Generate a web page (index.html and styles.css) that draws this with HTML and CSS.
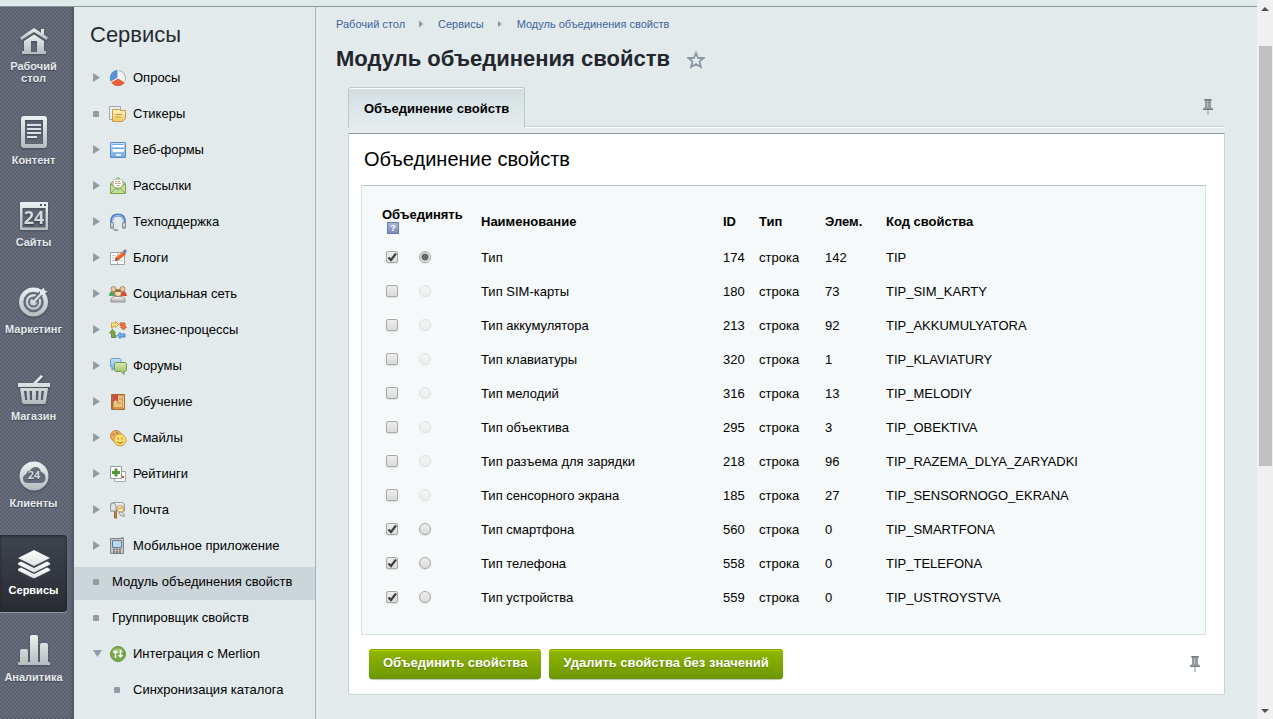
FILE: index.html
```html
<!DOCTYPE html>
<html lang="ru">
<head>
<meta charset="utf-8">
<meta name="viewport" content="width=device-width, initial-scale=1">
<title>Модуль объединения свойств</title>
<link rel="stylesheet" href="styles.css">
</head>
<body>
<svg class="defs" width="0" height="0" aria-hidden="true">
  <defs>
    <linearGradient id="metal" x1="0" y1="0" x2="0" y2="1"><stop offset="0" stop-color="#edf1f1"/><stop offset="1" stop-color="#b4bcbf"/></linearGradient>
    <linearGradient id="bright" x1="0" y1="0" x2="0" y2="1"><stop offset="0" stop-color="#ffffff"/><stop offset="1" stop-color="#dde1e2"/></linearGradient>
    <linearGradient id="blue" x1="0" y1="0" x2="0" y2="1"><stop offset="0" stop-color="#c6e4fa"/><stop offset="1" stop-color="#6ea6e0"/></linearGradient>
    <linearGradient id="green" x1="0" y1="0" x2="0" y2="1"><stop offset="0" stop-color="#d9eab4"/><stop offset="1" stop-color="#8fba5a"/></linearGradient>
    <linearGradient id="gold" x1="0" y1="0" x2="0" y2="1"><stop offset="0" stop-color="#fff6c4"/><stop offset="1" stop-color="#f2c65a"/></linearGradient>
    <linearGradient id="gray" x1="0" y1="0" x2="0" y2="1"><stop offset="0" stop-color="#fafafa"/><stop offset="1" stop-color="#a5a5a5"/></linearGradient>
    <symbol id="pin" viewBox="0 0 10 16"><path d="M1.500 0h7v2H8v6l2 1.500V11H0V9.500L2 8V2h-.5z" fill="#929ca0"/><path d="M1.500 0h7v1.500h-7zM0 10h10v1H0z" fill="#717b80"/><path d="M4 2h1v6H4z" fill="#b5bdc0"/><path d="M4.500 11h1v5h-1z" fill="#858f93"/></symbol>
  </defs>
</svg>
<div class="window">
  <div class="app">
    <div class="topbar"></div>
    <div class="columns">
      <nav class="rail" aria-label="Разделы">
        <a class="rail-item" href="#"><svg width="28" height="26" viewBox="0 0 28 26" fill="url(#metal)"><path d="M14 0L0 9.500l1.500 2.500L14 4l12.500 8L28 9.500l-4-2.800V1h-3v3.700z"/><path d="M4 13v10H2v3h24v-3h-2V13L14 6.500zM11 24V13h6v11z" fill-rule="evenodd"/></svg><span>Рабочий<br>стол</span></a>
        <a class="rail-item compact" href="#"><svg width="26" height="32" viewBox="0 0 26 32"><path d="M3 0h20q3 0 3 3v26q0 3-3 3H3q-3 0-3-3V3q0-3 3-3zM4 4v24h18V4z" fill-rule="evenodd" fill="url(#metal)"/><path d="M6 9h14M6 13h14M6 17h14M6 21h10" stroke="#dce1e2" stroke-width="2"/></svg><span>Контент</span></a>
        <a class="rail-item compact" href="#"><svg width="28" height="28" viewBox="0 0 28 28"><path d="M1 0h26q1 0 1 1v26q0 1-1 1H1q-1 0-1-1V1q0-1 1-1zM2.500 6v19.500h23V6zM20 2v2h2V2zM24 2v2h2V2z" fill-rule="evenodd" fill="url(#metal)"/><text class="icon-number" x="14" y="22" text-anchor="middle">24</text></svg><span>Сайты</span></a>
        <a class="rail-item" href="#"><svg width="30" height="30" viewBox="0 0 30 30"><circle cx="14.500" cy="15" r="14.500" fill="url(#metal)"/><circle cx="14.500" cy="15" r="9" fill="none" stroke="#666c7a" stroke-width="2.500"/><circle cx="14.500" cy="15" r="4.500" fill="none" stroke="#666c7a" stroke-width="2"/><path d="M15 14L23 5.500" stroke="#666c7a" stroke-width="5"/><path d="M14 15.500L23 6" stroke="#dfe4e4" stroke-width="2"/><path d="M21 4l4-3.500.5 3 3 .5-4 4-3.500-.5z" fill="#e6eaea"/></svg><span>Маркетинг</span></a>
        <a class="rail-item" href="#"><svg width="32" height="29" viewBox="0 0 32 29"><path d="M15 8L23 0l2 1.500L19 8h13v4H0V8zM2 13h28l-2 14q0 2-2 2H6q-2 0-2-2zM6 16l1.200 9h2L8.500 16zM11.500 16l.5 9h2v-9zM18 16v9h2l.5-9zM23.500 16l-.7 9h2l1.200-9z" fill-rule="evenodd" fill="url(#metal)"/></svg><span>Магазин</span></a>
        <a class="rail-item" href="#"><svg width="30" height="30" viewBox="0 0 30 30"><circle cx="15" cy="15" r="14.500" fill="url(#metal)"/><path d="M9 22q-5 0-5-4.500 0-3.500 3.500-4.500 0-3.500 3.500-3.500Q13 6 16.500 6q4.500 0 5.500 5 4.500 1 4.500 6 0 5-5 5z" fill="#666c7a"/><text class="icon-number small" x="15" y="18" text-anchor="middle">24</text></svg><span>Клиенты</span></a>
        <a class="rail-item active" href="#" aria-current="page"><svg width="32" height="28" viewBox="0 0 32 28" fill="url(#bright)"><path d="M16 0l16 8-16 8L0 8z"/><path d="M0 13l3-1.500L16 18l13-6.500 3 1.500v1.500L16 22.500 0 14.500z"/><path d="M0 19l3-1.500L16 24l13-6.500 3 1.500v1.500L16 28.500 0 20.500z"/></svg><span>Сервисы</span></a>
        <a class="rail-item" href="#"><svg width="32" height="30" viewBox="0 0 32 30" fill="url(#metal)"><path d="M2 27V16q0-2 2-2h4q2 0 2 2v11h2V2q0-2 2-2h4q2 0 2 2v25h2V10q0-2 2-2h4q2 0 2 2v17h2v3H0v-3z"/></svg><span>Аналитика</span></a>
      </nav>
      <aside class="sidebar">
        <h2>Сервисы</h2>
        <ul class="menu">
          <li><a href="#"><i class="arrow"></i><svg class="icon" viewBox="0 0 18 18"><circle cx="9" cy="9" r="7.500" fill="#f2f4f5" stroke="#a3acb8"/><path d="M9 9V1a8 8 0 0 0-7 12z" fill="#5b90d6"/><path d="M9 9l-7 4a8 8 0 0 0 14 0z" fill="#e2603a"/><path d="M9 1v8l7 4M9 9l-7 4" fill="none" stroke="#fff"/></svg>Опросы</a></li>
          <li><a href="#"><i class="dot"></i><svg class="icon" viewBox="0 0 18 18"><path d="M.5 1.500h11v13H.5z" fill="#eceef0" stroke="#a4a9ad"/><path d="M3.500 4.500h7l1 1h5v8l-3 3h-10z" fill="url(#gold)" stroke="#c89a45"/><path d="M6 9.500h7M6 12h6" stroke="#c59c48"/></svg>Стикеры</a></li>
          <li><a href="#"><i class="arrow"></i><svg class="icon" viewBox="0 0 18 18"><path d="M1.500 1.500h15v15h-15z" fill="url(#blue)" stroke="#5a8cca"/><path d="M4 4.500h10.500v1H4zM4 8.500h10.500v2H4z" fill="#fff" stroke="#fff"/><path d="M3.500 3.500h11M3.500 7.500h11" stroke="#73a2d6"/><path d="M7 13h5v2H7z" fill="#e3f0fb"/></svg>Веб-формы</a></li>
          <li><a href="#"><i class="arrow"></i><svg class="icon" viewBox="0 0 18 18"><path d="M1.500 6.500L9 .5l7.500 6v10h-15z" fill="url(#green)" stroke="#7ba34d"/><path d="M4.500 2.500h9v8H4.500z" fill="#fff" stroke="#c3ccb8"/><path d="M6 4.500h5M6 6.500h6M7 8.500h4" stroke="#d3a49c"/><path d="M2 7l7 6 7-6v9H2z" fill="#c6de99"/><path d="M2 16l5-5m9 5l-5-5M2 7l7 6 7-6" fill="none" stroke="#7fa851"/></svg>Рассылки</a></li>
          <li><a href="#"><i class="arrow"></i><svg class="icon" viewBox="0 0 18 18"><path d="M3 12Q1 2 9 2t6 10" fill="none" stroke="#5b82c0" stroke-width="3"/><path d="M3.500 9Q3 2.500 9 2.500T14.500 9" fill="none" stroke="#acc7ed"/><rect x="1.500" y="9.500" width="3" height="6" rx="1.500" fill="url(#gray)" stroke="#888"/><rect x="13.500" y="9.500" width="3" height="6" rx="1.500" fill="url(#gray)" stroke="#888"/><path d="M5 16q1 1.500 4 1.500" stroke="#999" stroke-width="2" fill="none"/></svg>Техподдержка</a></li>
          <li><a href="#"><i class="arrow"></i><svg class="icon" viewBox="0 0 18 18"><path d="M1.500 3.500h14v12h-14z" fill="#fff" stroke="#9da2a6"/><path d="M8.500 4v11M3 6.500h4M3 9h4M3 11.500h4M10 11.500h4" stroke="#c5c9cc"/><path d="M6 12l1-4 7-6 3 3-7 6z" fill="#e95d2b"/><path d="M8 8.500L14 3" stroke="#ffab78"/><path d="M13.500 2.500L16 0l2 2-2 3z" fill="#6d87b4"/><path d="M6 12l1-3 2 2z" fill="#5b443a"/></svg>Блоги</a></li>
          <li><a href="#"><i class="arrow"></i><svg class="icon" viewBox="0 0 18 18"><path d="M0 11q0-5 4-5t3 5z" fill="#58a35a"/><path d="M11 11q0-5 3-5t4 5z" fill="#cf4e42"/><circle cx="4.500" cy="4" r="2.500" fill="#f0cda0" stroke="#b28a5c"/><circle cx="13.500" cy="4" r="2.500" fill="#f0cda0" stroke="#b28a5c"/><path d="M2 17q-1-5 4-5.500h6q5 .5 4 5.500z" fill="url(#gray)" stroke="#989898"/><circle cx="9" cy="8" r="3.500" fill="#f8dbb2" stroke="#a67b48"/><path d="M5.500 7q1-3 3.500-3t3.500 3z" fill="#9b6f40"/></svg>Социальная сеть</a></li>
          <li><a href="#"><i class="arrow"></i><svg class="icon" viewBox="0 0 18 18"><path d="M2.500 2h4V.5l3 3-3 3V5H4v2H2.500z" fill="#fde28b" stroke="#d4a53a"/><path d="M11 2h5v4h1.500l-3 3-3-3H13V4.500h-2z" fill="#f1783f" stroke="#d05b33"/><path d="M16 13v3h-5v1.500l-2.500-3 2.500-3V13z" fill="#79b1ec" stroke="#4b82c0"/><path d="M7 16.500H2.500V12H.5l3-3.500 3 3.500H5.500v2H7z" fill="#7da650" stroke="#608d3e"/></svg>Бизнес-процессы</a></li>
          <li><a href="#"><i class="arrow"></i><svg class="icon" viewBox="0 0 18 18"><path d="M2 1.500h9l1 1v7l-1 1H5.500l-2.500 3v-3l-1.500-1v-7z" fill="url(#blue)" stroke="#6a9fd2"/><path d="M7 5.500h9l1.500 1v7l-1.500 1h-1v3l-3-3H7l-1.500-1v-7z" fill="url(#green)" stroke="#759b55"/></svg>Форумы</a></li>
          <li><a href="#"><i class="arrow"></i><svg class="icon" viewBox="0 0 18 18"><path d="M2.500 1.500h13v15h-13z" fill="#d5964c" stroke="#a5693a"/><path d="M3.500 2v14" stroke="#a9703d"/><path d="M5 3h8v11H5z" fill="#edc57e"/><path d="M4 2h5v7L6.500 7 4 9z" fill="#cf4a40"/><path d="M10 6h3M8 10h4" stroke="#c08f58"/><path d="M14.500 3v12" stroke="#f7d295"/></svg>Обучение</a></li>
          <li><a href="#"><i class="arrow"></i><svg class="icon" viewBox="0 0 18 18"><circle cx="7" cy="7" r="5.500" fill="#f2ad60" stroke="#c9874b"/><path d="M3.500 6l2-1M7 3.500l2 1" stroke="#8d602f"/><circle cx="11" cy="11" r="6" fill="#ffe173" stroke="#c99a3a"/><path d="M9 8.500v2M13 8.500v2M7.500 12.500q3.500 3.500 7 0" fill="none" stroke="#8b6b1f"/></svg>Смайлы</a></li>
          <li><a href="#"><i class="arrow"></i><svg class="icon" viewBox="0 0 18 18"><path d="M5.500 6.500h11v10h-11z" fill="#fff" stroke="#a1a7aa"/><path d="M13 11h2v2h-2z" fill="#d64131"/><path d="M1.500 1.500h11v12h-11z" fill="#fff" stroke="#939b9f"/><path d="M7 3.500v8M3 7.500h8" stroke="#579638" stroke-width="3"/></svg>Рейтинги</a></li>
          <li><a href="#"><i class="arrow"></i><svg class="icon" viewBox="0 0 18 18"><path d="M5.500 10h2v7h-2z" fill="#c9914a" stroke="#976730"/><path d="M1.500 10V4q0-2.500 3-2.500h8q3 0 3 2.500v6z" fill="url(#gray)" stroke="#999"/><path d="M1.500 10V5Q1.500 2 4 2t3 3v5z" fill="#e0e2e2" stroke="#999"/><path d="M9 5h5v6H9z" fill="#fff0af" stroke="#d4ac60"/><path d="M10 7l1 1 2-2" fill="none" stroke="#b78336"/><path d="M10 11q5-1 5.500 4.500l-4-1z" fill="#dddfdf" stroke="#999"/></svg>Почта</a></li>
          <li><a href="#"><i class="arrow"></i><svg class="icon" viewBox="0 0 18 18"><path d="M1.500 1.500h13v15h-13z" fill="#c9c9c9" stroke="#838383"/><path d="M12.500 0h2v2h-2z" fill="#888"/><path d="M3.500 3.500h9v7h-9z" fill="#b2dcf6" stroke="#6b7b8d"/><path d="M4 12.500h2m1 0h2m1 0h2M4 15h2m1 0h2m1 0h2" stroke="#666" stroke-width="1.500"/></svg>Мобильное приложение</a></li>
          <li><a class="selected" href="#" aria-current="page"><i class="dot"></i>Модуль объединения свойств</a></li>
          <li><a href="#"><i class="dot"></i>Группировщик свойств</a></li>
          <li><a href="#"><i class="arrow open"></i><svg class="icon" viewBox="0 0 18 18"><circle cx="9" cy="9" r="7.500" fill="#76a846" stroke="#6b9148"/><path d="M3 7a6.500 5.500 0 0 1 12 0 12 7 0 0 1-12 0z" fill="#a0c478"/><path d="M6.500 13V6M4.500 8l2-2 2 2M11.500 5v7M9.500 10l2 2 2-2" fill="none" stroke="#fff" stroke-width="1.500"/></svg>Интеграция с Merlion</a></li>
          <li><a class="nested" href="#"><i class="dot"></i>Синхронизация каталога</a></li>
        </ul>
      </aside>
      <main>
        <nav class="crumbs" aria-label="Навигация">
          <a href="#">Рабочий стол</a><i></i><a href="#">Сервисы</a><i></i><a href="#">Модуль объединения свойств</a>
        </nav>
        <div class="heading">
          <h1>Модуль объединения свойств</h1>
          <button class="plain" type="button" aria-label="В избранное"><svg width="18" height="18" viewBox="0 0 18 18"><path d="M9 2l2 5h5.500l-4 3.500L14 16l-5-3-5 3 1.500-5.500L1.500 7H7z" fill="#e5edef" stroke="#8e98a3" stroke-width="1.800"/></svg></button>
        </div>
        <section class="card">
          <div class="tabs">
            <button class="tab" type="button">Объединение свойств</button>
            <button class="plain" type="button" aria-label="Закрепить панель"><svg width="10" height="16"><use href="#pin"/></svg></button>
          </div>
          <form class="panel">
            <h3>Объединение свойств</h3>
            <div class="content">
              <table>
                <colgroup><col class="c-check"><col class="c-radio"><col class="c-name"><col class="c-id"><col class="c-type"><col class="c-count"><col></colgroup>
                <thead><tr><th colspan="2">Объединять<span class="help">?</span></th><th>Наименование</th><th>ID</th><th>Тип</th><th>Элем.</th><th>Код свойства</th></tr></thead>
                <tbody>
                  <tr><td><input type="checkbox" aria-label="Тип" checked></td><td><input type="radio" name="main" aria-label="Основное: Тип" checked></td><td>Тип</td><td>174</td><td>строка</td><td>142</td><td>TIP</td></tr>
                  <tr><td><input type="checkbox" aria-label="Тип SIM-карты"></td><td><input type="radio" name="main" aria-label="Основное: Тип SIM-карты" disabled></td><td>Тип SIM-карты</td><td>180</td><td>строка</td><td>73</td><td>TIP_SIM_KARTY</td></tr>
                  <tr><td><input type="checkbox" aria-label="Тип аккумулятора"></td><td><input type="radio" name="main" aria-label="Основное: Тип аккумулятора" disabled></td><td>Тип аккумулятора</td><td>213</td><td>строка</td><td>92</td><td>TIP_AKKUMULYATORA</td></tr>
                  <tr><td><input type="checkbox" aria-label="Тип клавиатуры"></td><td><input type="radio" name="main" aria-label="Основное: Тип клавиатуры" disabled></td><td>Тип клавиатуры</td><td>320</td><td>строка</td><td>1</td><td>TIP_KLAVIATURY</td></tr>
                  <tr><td><input type="checkbox" aria-label="Тип мелодий"></td><td><input type="radio" name="main" aria-label="Основное: Тип мелодий" disabled></td><td>Тип мелодий</td><td>316</td><td>строка</td><td>13</td><td>TIP_MELODIY</td></tr>
                  <tr><td><input type="checkbox" aria-label="Тип объектива"></td><td><input type="radio" name="main" aria-label="Основное: Тип объектива" disabled></td><td>Тип объектива</td><td>295</td><td>строка</td><td>3</td><td>TIP_OBEKTIVA</td></tr>
                  <tr><td><input type="checkbox" aria-label="Тип разъема для зарядки"></td><td><input type="radio" name="main" aria-label="Основное: Тип разъема для зарядки" disabled></td><td>Тип разъема для зарядки</td><td>218</td><td>строка</td><td>96</td><td>TIP_RAZEMA_DLYA_ZARYADKI</td></tr>
                  <tr><td><input type="checkbox" aria-label="Тип сенсорного экрана"></td><td><input type="radio" name="main" aria-label="Основное: Тип сенсорного экрана" disabled></td><td>Тип сенсорного экрана</td><td>185</td><td>строка</td><td>27</td><td>TIP_SENSORNOGO_EKRANA</td></tr>
                  <tr><td><input type="checkbox" aria-label="Тип смартфона" checked></td><td><input type="radio" name="main" aria-label="Основное: Тип смартфона"></td><td>Тип смартфона</td><td>560</td><td>строка</td><td>0</td><td>TIP_SMARTFONA</td></tr>
                  <tr><td><input type="checkbox" aria-label="Тип телефона" checked></td><td><input type="radio" name="main" aria-label="Основное: Тип телефона"></td><td>Тип телефона</td><td>558</td><td>строка</td><td>0</td><td>TIP_TELEFONA</td></tr>
                  <tr><td><input type="checkbox" aria-label="Тип устройства" checked></td><td><input type="radio" name="main" aria-label="Основное: Тип устройства"></td><td>Тип устройства</td><td>559</td><td>строка</td><td>0</td><td>TIP_USTROYSTVA</td></tr>
                </tbody>
              </table>
            </div>
            <div class="actions">
              <button class="action" type="button">Объединить свойства</button>
              <button class="action" type="button">Удалить свойства без значений</button>
              <button class="plain" type="button" aria-label="Закрепить кнопки"><svg width="10" height="16"><use href="#pin"/></svg></button>
            </div>
          </form>
        </section>
      </main>
    </div>
  </div>
  <div class="scrollbar" aria-hidden="true"><i class="up"></i><div class="track"><div class="thumb"></div></div><i class="down"></i></div>
</div>
</body>
</html>
```
FILE: styles.css
```css
* { box-sizing: border-box; }
body { margin: 0; font: 13px/16px "Liberation Sans", Arial, sans-serif; color: #000; background: #e2eaec; }
h1, h2, h3, ul { margin: 0; padding: 0; font-weight: normal; }
a { color: inherit; text-decoration: none; }
button { font: inherit; border: 0; padding: 0; background: none; cursor: pointer; }
svg { display: block; }
.defs { position: absolute; }
.window { display: flex; height: 100vh; overflow: hidden; }
.app { flex: 1; min-width: 0; display: flex; flex-direction: column; overflow: hidden; }
.topbar { flex: none; height: 7px; background: #dfe9ea; border-bottom: 1px solid #8b9799; }
.columns { flex: 1; display: flex; min-height: 0; }

.rail { flex: none; width: 74px; padding: 16px 7px 0 0; display: flex; flex-direction: column; gap: 10px; color: #e6eaec; font-size: 11px; line-height: 12px; font-weight: bold; text-align: center;
  background: radial-gradient(circle at 1px 1px, #5b616f 1px, transparent 1px) 0 0 / 4px 4px, radial-gradient(circle at 1px 1px, #5b616f 1px, transparent 1px) 2px 2px / 4px 4px, #676d7b;
  box-shadow: inset -3px 0 3px -1px #4f5563; }
.rail-item { flex: none; height: 77px; padding-bottom: 16px; display: flex; flex-direction: column; align-items: center; justify-content: flex-end; gap: 6px; text-shadow: 0 1px 1px #3e4450; }
.rail-item.compact { height: 72px; }
.rail-item svg { filter: drop-shadow(0 1px 1px #444a56); }
.rail-item.active { color: #fff; border-radius: 0 4px 4px 0; background: linear-gradient(#3f4450, #282b32); box-shadow: inset 0 1px 3px #20232a, 0 1px 0 #9297a1; }
.icon-number { font: bold 18px "Open Sans", sans-serif; fill: #d4d9da; }
.icon-number.small { font-size: 11px; }

.sidebar { flex: none; width: 242px; border-right: 1px solid #a5b4c1; overflow: hidden; }
.sidebar h2 { padding: 14px 16px 14px; font-size: 22px; line-height: 28px; color: #262a30; }
.menu { list-style: none; display: flex; flex-direction: column; gap: 3px; }
.menu a { display: flex; align-items: center; height: 33px; padding: 0 8px 4px 19px; white-space: nowrap; }
.menu .selected { background: #cbd5da; }
.menu .nested { padding-left: 40px; }
.menu i { flex: none; }
.menu .arrow { width: 7px; height: 9px; margin-right: 9px; background: #939ba7; clip-path: polygon(0 0, 100% 50%, 0 100%); }
.menu .arrow.open { width: 9px; height: 7px; margin-right: 7px; clip-path: polygon(0 0, 100% 0, 50% 100%); }
.menu .dot { width: 6px; height: 6px; margin-right: 13px; border-radius: 1px; background: #939ba7; }
.menu .dot + .icon { margin-left: -3px; }
.menu .icon { width: 18px; height: 18px; margin-right: 6px; flex: none; }

main { flex: 1; min-width: 0; padding: 9px 32px 24px 20px; }
.crumbs { display: flex; align-items: center; font-size: 11px; line-height: 16px; color: #3f639b; }
.crumbs i { width: 4px; height: 7px; margin: 0 15px 0 14px; background: #8d979b; clip-path: polygon(0 0, 100% 50%, 0 100%); }
.heading { display: flex; align-items: center; gap: 17px; padding: 13px 0 14px; }
h1 { font-size: 22px; line-height: 28px; font-weight: bold; color: #23272d; }
.heading .plain { padding-top: 2px; }
.card { margin-left: 12px; }
.tabs { display: flex; align-items: flex-start; justify-content: space-between; height: 46px; padding-right: 12px; background: linear-gradient(#c9d3d6, #c9d3d6) 0 39px / 100% 1px no-repeat, linear-gradient(#fff, #fff) 0 40px / 100% 1px no-repeat, linear-gradient(#e5edef, #e5edef) 0 41px / 100% 5px no-repeat; }
.tabs .plain { padding-top: 12px; }
.tab { height: 41px; padding: 1px 15px 0; border: 1px solid #bdc9cb; border-bottom: 0; border-radius: 3px 3px 0 0; font-weight: bold; background: linear-gradient(#d3dddf, #e5edef); box-shadow: inset 0 1px 0 #fff; white-space: nowrap; }
.panel { background: #fff; border: 1px solid #c5d4d5; border-top: 1px solid #8f9da2; border-radius: 0 0 2px 2px; }
.panel h3 { padding: 11px 15px; font-size: 20px; line-height: 29px; }
.content { margin: 0 18px 0 12px; padding: 16px 20px 20px; border: 1px solid #d5e3e6; border-top-color: #b9c6ca; background: #f5f9f9; }
table { width: 100%; table-layout: fixed; border-collapse: collapse; text-align: left; }
th, td { padding: 2px 0 0; }
th { height: 38px; }
th:first-child { padding: 0; line-height: 14px; }
td { height: 34px; }
td:first-child { padding: 0 0 0 4px; }
td:nth-child(2) { padding: 0 0 0 3px; }
.c-check { width: 34px; }
.c-radio { width: 65px; }
.c-name { width: 242px; }
.c-id { width: 36px; }
.c-type { width: 66px; }
.c-count { width: 61px; }
.help { display: block; width: 12px; height: 12px; margin-left: 5px; border: 1px solid #6d79ae; background: linear-gradient(#aab4da, #7f8bbd); color: #fff; font-size: 9px; line-height: 10px; text-align: center; }
input { appearance: none; display: block; width: 12px; height: 12px; margin: 0; border: 1px solid #a6a8a8; border-radius: 2px; background: linear-gradient(#ededed, #dcdcdc); box-shadow: 0 1px 1px #dfe3e3; }
input[type="checkbox"]:checked { background: url("data:image/svg+xml,%3Csvg xmlns='http://www.w3.org/2000/svg' viewBox='0 0 10 10'%3E%3Cpath d='M1.500 5.500L4 8 9 1.500' fill='none' stroke='%23404040' stroke-width='2.200'/%3E%3C/svg%3E") center / 10px 10px no-repeat, linear-gradient(#ededed, #dcdcdc); }
input[type="radio"] { border-radius: 50%; }
input[type="radio"]:checked { background: radial-gradient(circle, #666 3px, #e4e4e4 4px); }
input:disabled { opacity: .3; }
.actions { display: flex; align-items: center; gap: 8px; padding: 14px 24px 15px 20px; }
.actions .plain { margin-left: auto; }
.action { height: 30px; padding: 0 14px 2px; border-radius: 4px; color: #fff; font-weight: bold; white-space: nowrap; background: linear-gradient(#91b700, #6d9700); box-shadow: inset 0 1px 0 #7da000, inset 0 2px 0 #b9d500, inset 0 -1px 0 #688d05, 0 1px 1px #bcc7b0; text-shadow: 0 1px 1px #5c7f00; }

.scrollbar { flex: none; width: 16px; display: flex; flex-direction: column; align-items: center; background: #f0f0f0; }
.scrollbar i { width: 8px; height: 4px; background: #505050; }
.scrollbar .up { margin: 7px 0; clip-path: polygon(50% 0, 100% 100%, 0 100%); }
.scrollbar .down { margin: 7px 0 6px; clip-path: polygon(0 0, 100% 0, 50% 100%); }
.track { flex: 1; width: 13px; padding-top: 28px; }
.thumb { height: 64%; background: #c1c1c1; }
```
